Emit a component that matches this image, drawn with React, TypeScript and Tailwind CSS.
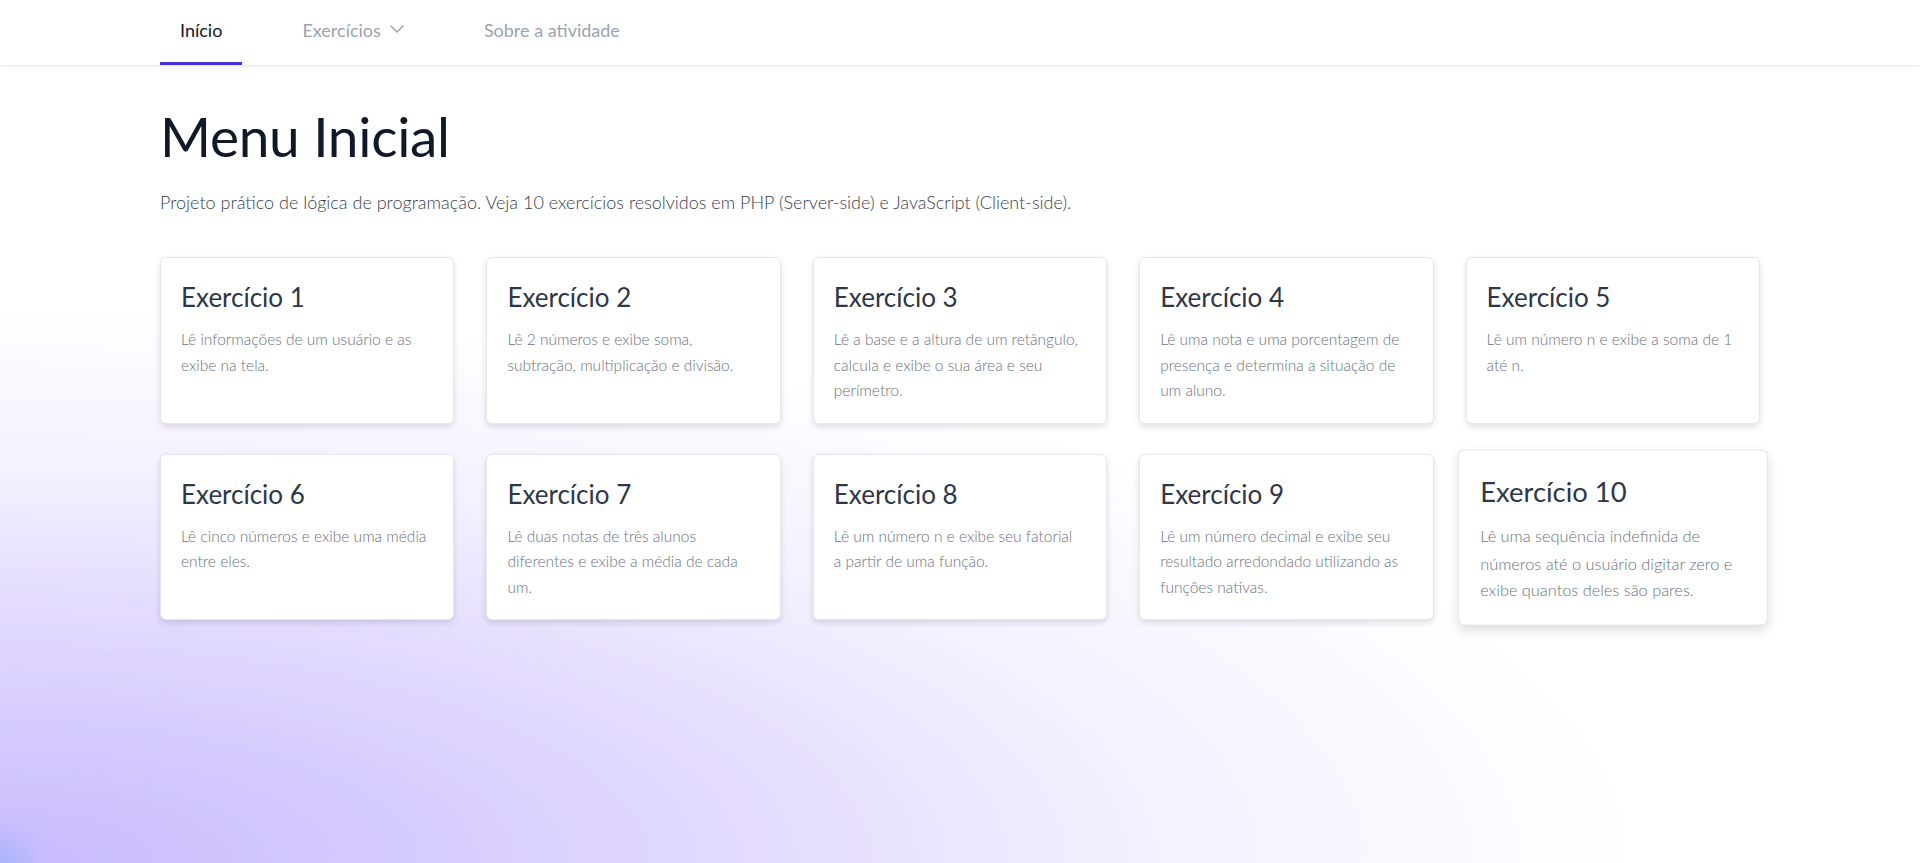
import React from "react";

const exercicios = [
  { t: "Exercício 1", d: "Lê informações de um usuário e as exibe na tela." },
  { t: "Exercício 2", d: "Lê 2 números e exibe soma, subtração, multiplicação e divisão." },
  { t: "Exercício 3", d: "Lê a base e a altura de um retângulo, calcula e exibe o sua área e seu perímetro." },
  { t: "Exercício 4", d: "Lê uma nota e uma porcentagem de presença e determina a situação de um aluno." },
  { t: "Exercício 5", d: "Lê um número n e exibe a soma de 1 até n." },
  { t: "Exercício 6", d: "Lê cinco números e exibe uma média entre eles." },
  { t: "Exercício 7", d: "Lê duas notas de três alunos diferentes e exibe a média de cada um." },
  { t: "Exercício 8", d: "Lê um número n e exibe seu fatorial a partir de uma função." },
  { t: "Exercício 9", d: "Lê um número decimal e exibe seu resultado arredondado utilizando as funções nativas." },
  { t: "Exercício 10", d: "Lê uma sequência indefinida de números até o usuário digitar zero e exibe quantos deles são pares." },
];

export default function App() {
  return (
    <div
      className="min-h-[863px] w-full bg-white bg-[radial-gradient(circle_at_0%_100%,rgba(165,180,252,0.85)_0px,rgba(165,180,252,0)_45px),radial-gradient(ellipse_1650px_560px_at_0%_100%,#c8bafd_0%,#d6cbfe_25%,#e5ddfe_48%,#f4f0ff_70%,rgba(255,255,255,0)_100%)]"
      style={{ fontFamily: "Lato, 'Noto Sans', sans-serif" }}
    >
      <nav className="h-[65px] bg-white shadow-[0_1px_3px_rgba(0,0,0,0.12)]">
        <div className="mx-auto flex h-full w-[1600px] items-stretch gap-[40px]">
          <a className="relative flex items-center px-5 pb-[4px] text-[18px] text-[#111827]">
            Início
            <span className="absolute bottom-0 left-0 right-0 h-[3px] bg-[#4a2fdb]" />
          </a>
          <a className="flex items-center gap-[9px] px-5 pb-[4px] text-[18px] text-[#9ca3af]">
            Exercícios
            <svg width="14" height="8" viewBox="0 0 14 8" fill="none" className="mt-[-4px]">
              <polyline points="1,1 7,7 13,1" stroke="#9ca3af" strokeWidth="1.5" strokeLinecap="round" strokeLinejoin="round" />
            </svg>
          </a>
          <a className="flex items-center px-5 pb-[4px] text-[18px] text-[#9ca3af]">Sobre a atividade</a>
        </div>
      </nav>

      <main className="mx-auto w-[1600px] pt-[44px] pb-10">
        <h1 className="text-[55px] font-normal leading-none tracking-[-0.3px] text-[#111827]">Menu Inicial</h1>
        <p className="mt-[25px] text-[18px] font-light text-[#374151]">
          Projeto prático de lógica de programação. Veja 10 exercícios resolvidos em PHP (Server-side) e JavaScript (Client-side).
        </p>

        <div className="mt-[41px] grid grid-cols-5 gap-x-8 gap-y-[30px]">
          {exercicios.map((e, i) => (
            <div
              key={i}
              className={
                "rounded-md border border-[#e5e7eb] bg-white pl-5 pr-6 pt-[21px] pb-[19px] shadow-[0_3px_6px_rgba(0,0,0,0.12)]" +
                (i === 9 ? " scale-[1.054] shadow-[0_5px_10px_rgba(0,0,0,0.12)]" : "")
              }
            >
              <h2 className="text-[26px] font-normal leading-[36px] text-[#2d3748]">{e.t}</h2>
              <p className="mt-[12px] text-[15.5px] font-light leading-[25.5px] text-[#6b7280]">{e.d}</p>
            </div>
          ))}
        </div>
      </main>
    </div>
  );
}
